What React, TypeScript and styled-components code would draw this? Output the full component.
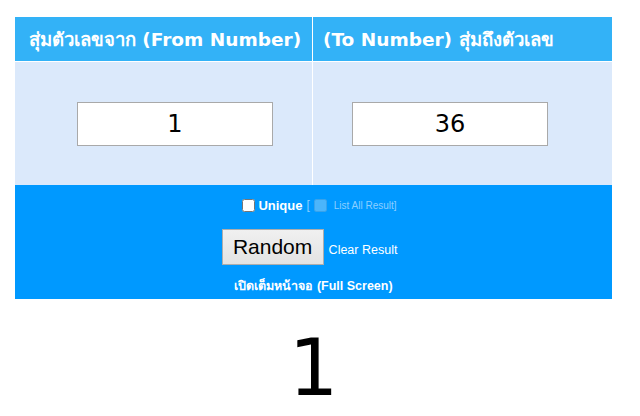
import React, { useState } from 'react'
import styled, { createGlobalStyle } from 'styled-components'

const GlobalStyle = createGlobalStyle`
  body {
    margin: 0;
    background: #ffffff;
    font-family: Tahoma, "DejaVu Sans", "Noto Sans", sans-serif;
  }
`

export default function App() {
  const [from, setFrom] = useState('1')
  const [to, setTo] = useState('36')
  const [result] = useState('1')

  return (
    <>
      <GlobalStyle />
      <Div_Page>
        <Div_Grid>
          <Div_HeadCell align='center'>สุ่มตัวเลขจาก (From Number)</Div_HeadCell>
          <Div_HeadCell align='left'>(To Number) สุ่มถึงตัวเลข</Div_HeadCell>
          <Div_BodyCell side='left'>
            <Input_Number value={from} onChange={e => setFrom(e.target.value)} />
          </Div_BodyCell>
          <Div_BodyCell side='right'>
            <Input_Number value={to} onChange={e => setTo(e.target.value)} />
          </Div_BodyCell>
        </Div_Grid>
        <Div_Controls>
          <Div_OptionRow>
            <Input_Check type='checkbox' />
            <Span_Unique>Unique</Span_Unique>
            <Span_Faint>[</Span_Faint>
            <Input_Check type='checkbox' disabled />
            <Span_Small>List All Result]</Span_Small>
          </Div_OptionRow>
          <Div_ButtonRow>
            <Button_Random>Random</Button_Random>
            <A_Link>Clear Result</A_Link>
          </Div_ButtonRow>
          <A_Full>เปิดเต็มหน้าจอ (Full Screen)</A_Full>
        </Div_Controls>
        <Div_Result>{result}</Div_Result>
      </Div_Page>
    </>
  )
}

const Div_Page = styled.div`
  width: 597px;
  margin: 17px 0 0 15px;
`

const Div_Grid = styled.div`
  display: grid;
  grid-template-columns: 297px 299px;
  grid-template-rows: 44px 123px;
  gap: 1px;
  background: #ffffff;
`

const Div_HeadCell = styled.div<{ align: 'center' | 'left' }>`
  background: #33b2f7;
  color: #ffffff;
  font-weight: bold;
  font-size: 18.5px;
  display: flex;
  align-items: center;
  justify-content: ${p => (p.align === 'center' ? 'center' : 'flex-start')};
  padding-left: ${p => (p.align === 'center' ? '3px' : '10px')};
  white-space: nowrap;
  overflow: hidden;
`

const Div_BodyCell = styled.div<{ side: 'left' | 'right' }>`
  background: #dbe9fb;
  display: flex;
  align-items: center;
  justify-content: ${p => (p.side === 'left' ? 'flex-end' : 'flex-start')};
  padding: ${p => (p.side === 'left' ? '0 39px 0 0' : '0 0 0 39px')};
`

const Input_Number = styled.input`
  box-sizing: border-box;
  width: 196px;
  height: 44px;
  border: 1px solid #a9a9a9;
  background: #ffffff;
  text-align: center;
  font-family: "DejaVu Sans", "Open Sans", sans-serif;
  font-size: 24px;
  color: #000000;
  outline: none;
`

const Div_Controls = styled.div`
  background: #0099ff;
  height: 114px;
  box-sizing: border-box;
  padding-top: 11px;
  display: flex;
  flex-direction: column;
  align-items: center;
  color: #ffffff;
  font-family: "Liberation Sans", "DejaVu Sans", sans-serif;
`

const Div_OptionRow = styled.div`
  display: flex;
  align-items: center;
  height: 18px;
  font-size: 12px;
  margin-left: 12px;
`

const Input_Check = styled.input`
  width: 13px;
  height: 13px;
  margin: 0 3px 0 0;
  accent-color: #dddddd;
  &:disabled {
    opacity: 0.45;
  }
`

const Span_Unique = styled.span`
  font-weight: bold;
  font-size: 13px;
  margin-right: 4px;
`

const Span_Faint = styled.span`
  color: #8ccfff;
  margin-right: 4px;
`

const Span_Small = styled.span`
  color: #8ccfff;
  font-size: 10px;
  margin-left: 4px;
`

const Div_ButtonRow = styled.div`
  display: flex;
  align-items: flex-end;
  margin-top: 15px;
  margin-right: 8px;
  gap: 5px;
`

const Button_Random = styled.button`
  width: 102px;
  height: 36px;
  border: 1px solid #adadad;
  border-radius: 0;
  background: linear-gradient(#f0f0f0, #e3e3e3);
  font-family: "Liberation Sans", Arial, sans-serif;
  font-size: 21px;
  color: #000000;
  padding: 0;
`

const A_Link = styled.a`
  font-size: 12.5px;
  color: #ffffff;
  line-height: 14px;
  margin-bottom: 8px;
  cursor: pointer;
`

const A_Full = styled.a`
  margin-top: 11px;
  font-size: 12.5px;
  font-weight: bold;
  color: #ffffff;
  cursor: pointer;
`

const Div_Result = styled.div`
  margin-top: 34px;
  text-align: center;
  font-family: "DejaVu Sans", sans-serif;
  font-size: 78px;
  line-height: 70px;
  color: #000000;
`
